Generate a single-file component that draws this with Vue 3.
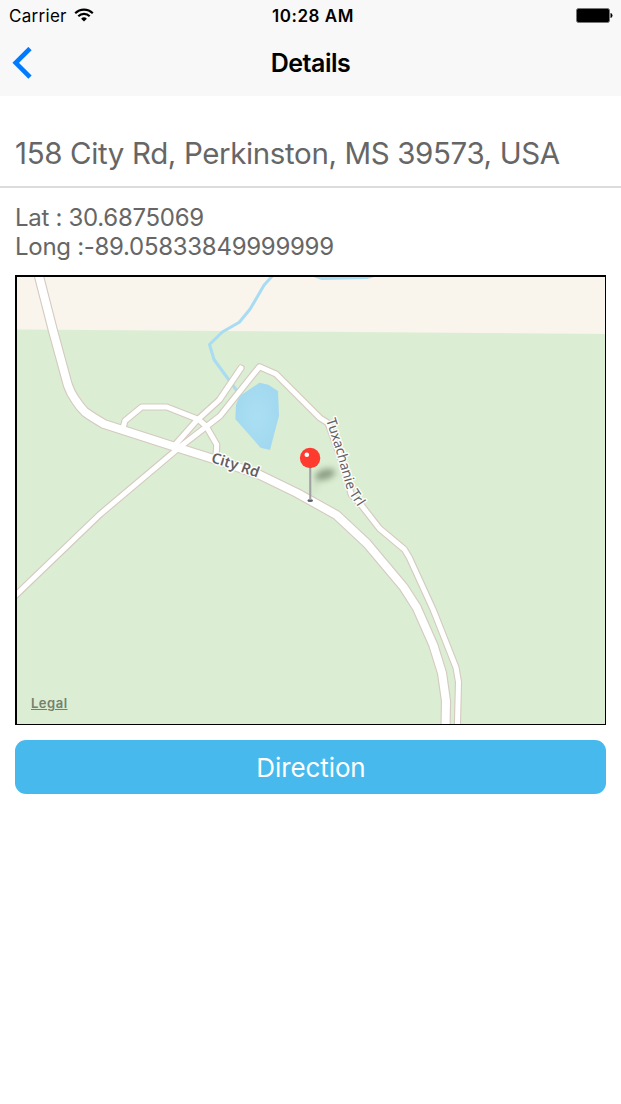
<script setup>
const mainRoad = 'M37.5 270 L39.2 277 L52.8 330 L67.8 385 Q70.5 393 75.5 400 Q80 407 85 412 Q92 417 104 424 L177 447.5 L220 461 L260 475 L297 493 L336.5 515 L367 543.5 L403.3 586.7 L416.7 607.5 L433.3 645 L442 673 L446 701 L445.5 730'
const smallRoads = [
  'M10 600.5 L17 594 L100 514.3 L178.3 448.3 L220 416 L259.5 366.7 L276 374 L320 418 L328 423 L345 470 L351 494 L362 506 L379.5 528.5 L404.5 549.5 L409.3 557.5 L433.3 610 L456 667.5 L458.5 682 L457.3 730',
  'M241 368 L219.3 400 L196.7 420.5 L175 445',
  'M123.3 427 L125 420.7 L141.7 407 L166.7 407 L198.3 419.3 L206 426 L216.7 444.5 L216 458',
]
</script>

<template>
  <div class="screen">
    <header class="top">
      <div class="status">
        <div class="carrier">
          <span class="carrier-name">Carrier</span>
          <svg class="wifi" width="20" height="14" viewBox="0 0 20 14">
            <path d="M1.2 5.2 A12.4 12.4 0 0 1 18.8 5.2" fill="none" stroke="#000" stroke-width="2.2" />
            <path d="M4.3 8.3 A8 8 0 0 1 15.7 8.3" fill="none" stroke="#000" stroke-width="2.2" />
            <path d="M10 13.6 L7.1 10.7 A4.1 4.1 0 0 1 12.9 10.7 Z" />
          </svg>
        </div>
        <span class="time">10:28 AM</span>
        <svg class="battery" width="37" height="15" viewBox="0 0 37 15">
          <rect x="0.5" y="0.5" width="33" height="14" rx="2" fill="#000" stroke="#777" />
          <path d="M34.5 5 Q36.5 5.3 36.5 7.5 Q36.5 9.7 34.5 10 Z" />
        </svg>
      </div>
      <div class="nav">
        <svg class="back" width="20" height="32" viewBox="0 0 20 32">
          <path d="M18 1.5 L3.7 15.8 L18 30.1" fill="none" stroke="#007aff" stroke-width="4.6" />
        </svg>
        <h1 class="title"><span>Details</span></h1>
      </div>
    </header>

    <div class="address"><span>158 City Rd, Perkinston, MS 39573, USA</span></div>

    <div class="coords">
      <div><span class="lat">Lat : 30.6875069</span></div>
      <div><span class="long">Long :-89.05833849999999</span></div>
    </div>

    <div class="map">
      <svg width="588" height="447" viewBox="17 277 588 447">
        <defs>
          <radialGradient id="pond">
            <stop offset="0" stop-color="#aadff3" />
            <stop offset="1" stop-color="#a3d9f0" />
          </radialGradient>
          <filter id="soft" x="-50%" y="-80%" width="200%" height="260%">
            <feGaussianBlur stdDeviation="3" />
          </filter>
          <path id="trail" d="M326 420 L334.5 446 L344 479 L347.5 491 L358 507 L366 518" />
          <path id="city" d="M210.5 462 L236 470 L272 483" />
        </defs>
        <rect x="17" y="277" width="588" height="447" fill="#dbedd2" />
        <path d="M17 277 H605 V334 L17 329.5 Z" fill="#f9f4ec" />
        <g fill="none" stroke="#a8dcf2" stroke-width="3" stroke-linejoin="round">
          <path d="M274 274 L264 285.3 L250 309.3 L239.3 322.3 L222.3 332 L209.5 344.5 L214 359.5 L237 391" />
          <path d="M313 275 L322 278.6 L366.7 277.6 L374 275.5" />
        </g>
        <path d="M259.5 382.7 L268.3 384.7 L278 391 L279 415.7 L270 450 L260.5 447.7 L235.3 419 L236 405 L239 396.5 Z" fill="url(#pond)" />

        <g fill="none" stroke="#d4cac0" stroke-linejoin="round" stroke-linecap="round">
          <path v-for="d in smallRoads" :key="d" :d="d" stroke-width="7.2" />
          <path :d="mainRoad" stroke-width="10.2" />
        </g>
        <g fill="none" stroke="#fff" stroke-linejoin="round" stroke-linecap="round">
          <path v-for="d in smallRoads" :key="d" :d="d" stroke-width="5" />
          <path :d="mainRoad" stroke-width="8" />
        </g>

        <text class="road city"><textPath href="#city">City Rd</textPath></text>
        <text class="road trail"><textPath href="#trail">Tuxachanie Trl</textPath></text>

        <ellipse cx="325" cy="474.5" rx="10.5" ry="5" transform="rotate(-16 325 474.5)" fill="#56694e" opacity="0.62" filter="url(#soft)" />
        <path d="M311 499 L316 480 L320 478 Z" fill="#56694e" opacity="0.25" filter="url(#soft)" />
        <ellipse cx="310.2" cy="500.5" rx="2.8" ry="1.5" fill="#5b6168" />
        <rect x="309.2" y="466" width="2.1" height="34" fill="#9fa1a3" />
        <circle cx="310.1" cy="458" r="10.2" fill="#ff3a2f" />
        <circle cx="306.8" cy="454.8" r="2.3" fill="#fff" />
      </svg>
      <a class="legal">Legal</a>
    </div>

    <button class="direction"><span>Direction</span></button>
  </div>
</template>

<style>
body {
  background: #fff;
}
</style>

<style scoped>
.screen {
  width: 621px;
  height: 1104px;
  overflow: hidden;
  background: #fff;
  color: #666;
  font-family: Inter, "Liberation Sans", sans-serif;
}
.top {
  height: 96px;
  background: #f8f8f8;
  color: #000;
}
.status {
  display: grid;
  grid-template-columns: 1fr auto 1fr;
  align-items: center;
  height: 31px;
  padding: 0 8px 0 9px;
  font-size: 17px;
}
.carrier {
  display: flex;
  align-items: center;
  gap: 7px;
}
.carrier-name {
  letter-spacing: 0.3px;
}
.wifi {
  margin-top: -2px;
}
.time {
  padding-left: 4px;
  font-weight: 600;
  letter-spacing: 0.55px;
}
.battery {
  justify-self: end;
}
.nav {
  display: grid;
  grid-template-columns: 1fr auto 1fr;
  align-items: center;
  height: 64px;
  padding: 0 12px;
}
.title {
  margin: 0;
  font-size: 25px;
  font-weight: 600;
  letter-spacing: -0.5px;
}
.address {
  box-sizing: border-box;
  height: 92px;
  padding: 39px 15px 0;
  border-bottom: 2px solid #dcdcdc;
  font-size: 29.5px;
  line-height: 36px;
  letter-spacing: -0.37px;
  white-space: nowrap;
}
.coords {
  height: 87px;
  box-sizing: border-box;
  padding: 16px 15px 0;
  font-size: 24px;
  line-height: 28.5px;
  letter-spacing: -0.29px;
}
.map {
  position: relative;
  box-sizing: border-box;
  width: 591px;
  height: 450px;
  margin: 0 15px;
  border: solid #000;
  border-width: 2px 1px 1px 2px;
}
.map svg {
  display: block;
}
.road {
  font-family: "Noto Sans", sans-serif;
  paint-order: stroke;
  stroke: #fff;
  stroke-opacity: 0.85;
  stroke-width: 3px;
  stroke-linejoin: round;
}
.city {
  font-size: 14.5px;
  font-weight: 600;
  fill: #625f63;
}
.trail {
  font-size: 13.8px;
  fill: #626063;
}
.legal {
  position: absolute;
  left: 14px;
  bottom: 12px;
  color: #74806f;
  font-size: 13px;
  font-weight: 600;
  line-height: 18px;
  letter-spacing: 0.5px;
  text-decoration: underline;
}
.direction {
  display: block;
  width: 591px;
  height: 54px;
  margin: 15px 15px 0;
  padding: 2px 0 0 1px;
  border: 0;
  border-radius: 11px;
  background: #48b9ec;
  color: #fff;
  font: 400 26px/52px Inter, "Liberation Sans", sans-serif;
  letter-spacing: -0.1px;
}
</style>
